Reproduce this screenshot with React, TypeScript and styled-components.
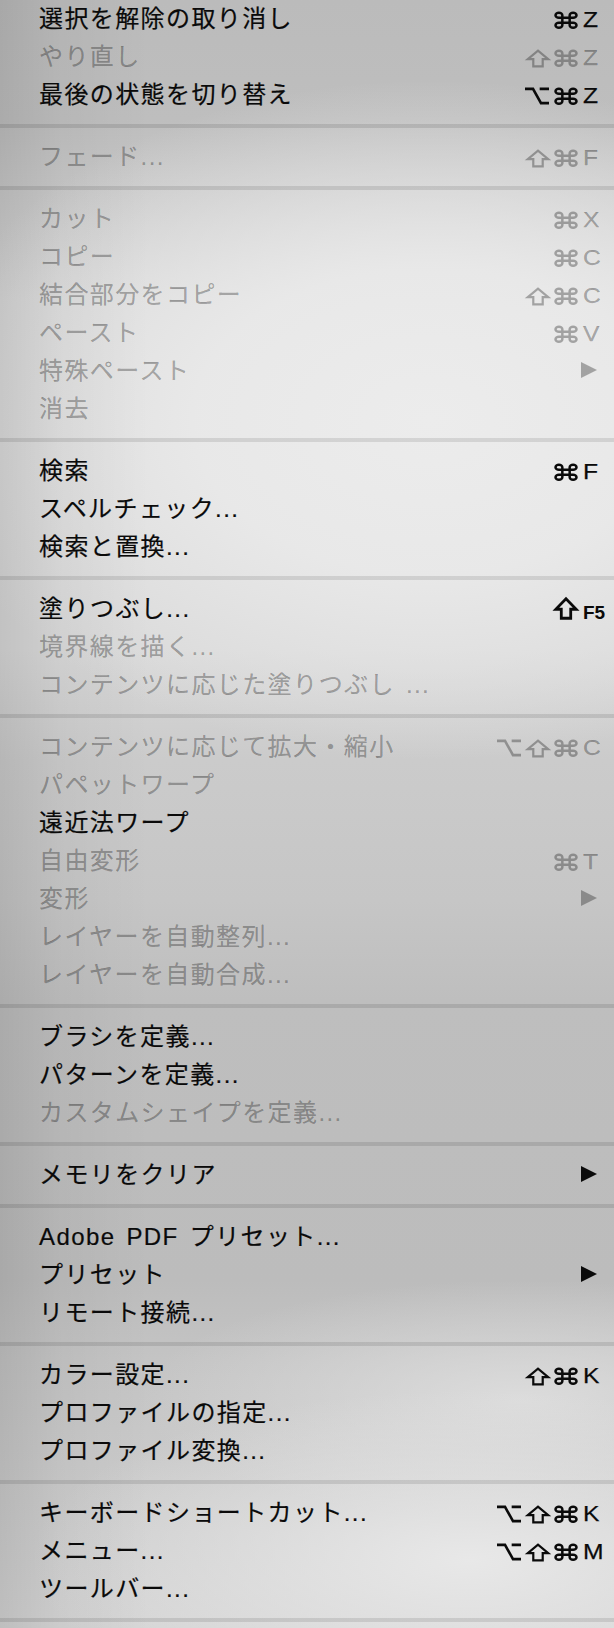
import React from 'react';
import styled, { createGlobalStyle } from 'styled-components';

type Mod = 'opt' | 'shift' | 'cmd';

interface Item {
  label: string;
  disabled?: boolean;
  mods?: Mod[];
  keyChar?: string;
  submenu?: boolean;
  fnKey?: boolean;
}

const groups: Item[][] = [
  [
    { label: '選択を解除の取り消し', mods: ['cmd'], keyChar: 'Z' },
    { label: 'やり直し', disabled: true, mods: ['shift', 'cmd'], keyChar: 'Z' },
    { label: '最後の状態を切り替え', mods: ['opt', 'cmd'], keyChar: 'Z' },
  ],
  [{ label: 'フェード...', disabled: true, mods: ['shift', 'cmd'], keyChar: 'F' }],
  [
    { label: 'カット', disabled: true, mods: ['cmd'], keyChar: 'X' },
    { label: 'コピー', disabled: true, mods: ['cmd'], keyChar: 'C' },
    { label: '結合部分をコピー', disabled: true, mods: ['shift', 'cmd'], keyChar: 'C' },
    { label: 'ペースト', disabled: true, mods: ['cmd'], keyChar: 'V' },
    { label: '特殊ペースト', disabled: true, submenu: true },
    { label: '消去', disabled: true },
  ],
  [
    { label: '検索', mods: ['cmd'], keyChar: 'F' },
    { label: 'スペルチェック...' },
    { label: '検索と置換...' },
  ],
  [
    { label: '塗りつぶし...', mods: ['shift'], keyChar: 'F5', fnKey: true },
    { label: '境界線を描く...', disabled: true },
    { label: 'コンテンツに応じた塗りつぶし ...', disabled: true },
  ],
  [
    { label: 'コンテンツに応じて拡大・縮小', disabled: true, mods: ['opt', 'shift', 'cmd'], keyChar: 'C' },
    { label: 'パペットワープ', disabled: true },
    { label: '遠近法ワープ' },
    { label: '自由変形', disabled: true, mods: ['cmd'], keyChar: 'T' },
    { label: '変形', disabled: true, submenu: true },
    { label: 'レイヤーを自動整列...', disabled: true },
    { label: 'レイヤーを自動合成...', disabled: true },
  ],
  [
    { label: 'ブラシを定義...' },
    { label: 'パターンを定義...' },
    { label: 'カスタムシェイプを定義...', disabled: true },
  ],
  [{ label: 'メモリをクリア', submenu: true }],
  [
    { label: 'Adobe PDF プリセット...' },
    { label: 'プリセット', submenu: true },
    { label: 'リモート接続...' },
  ],
  [
    { label: 'カラー設定...', mods: ['shift', 'cmd'], keyChar: 'K' },
    { label: 'プロファイルの指定...' },
    { label: 'プロファイル変換...' },
  ],
  [
    { label: 'キーボードショートカット...', mods: ['opt', 'shift', 'cmd'], keyChar: 'K' },
    { label: 'メニュー...', mods: ['opt', 'shift', 'cmd'], keyChar: 'M' },
    { label: 'ツールバー...' },
  ],
  [],
];

const GlobalStyle = createGlobalStyle`
  html, body {
    margin: 0;
    padding: 0;
  }
  body {
    background: #bdbdbd;
  }
`;

const Panel = styled.div`
  display: flow-root;
  width: 614px;
  height: 1628px;
  overflow: hidden;
  background:
    linear-gradient(90deg, rgba(0, 0, 0, 0.1) 0, rgba(0, 0, 0, 0.04) 60px, rgba(0, 0, 0, 0) 150px),
    radial-gradient(ellipse 520px 340px at 430px 420px, rgba(236, 236, 236, 1) 0, rgba(234, 234, 234, 0.9) 45%, rgba(230, 230, 230, 0) 100%),
    radial-gradient(ellipse 440px 170px at 470px 1560px, rgba(232, 232, 232, 1) 0, rgba(230, 230, 230, 0) 100%),
    radial-gradient(ellipse 380px 120px at 520px 1400px, rgba(222, 222, 222, 0.9) 0, rgba(222, 222, 222, 0) 100%),
    linear-gradient(180deg, #bbbbbb 0, #bebebe 120px, #cacaca 200px, #d8d8d8 300px, #d8d8d8 650px,
      #cbcbcb 760px, #c6c6c6 900px, #bebebe 1000px, #bcbcbc 1280px, #c4c4c4 1360px, #cccccc 1500px, #d4d4d4 1628px);
`;

const Menu = styled.ul`
  list-style: none;
  margin: -10px 0 0;
  padding: 0;
  font-family: 'Liberation Sans', 'Noto Sans CJK JP', sans-serif;
`;

const Group = styled.li`
  padding: 10px 0;
  border-bottom: 4px solid rgba(0, 0, 0, 0.1);
`;

const Row = styled.div<{ $disabled?: boolean }>`
  display: grid;
  grid-template-columns: 1fr auto 37px;
  align-items: center;
  height: 38px;
  padding-left: 39px;
  color: ${(p) => (p.$disabled ? 'rgba(0, 0, 0, 0.3)' : '#0a0a0a')};
`;

const Label = styled.span`
  font-size: 24px;
  letter-spacing: 1.4px;
  word-spacing: 3px;
  line-height: 38px;
  white-space: nowrap;
  -webkit-text-stroke: 0.2px currentColor;
`;

const Mods = styled.span`
  display: flex;
  justify-content: flex-end;
  align-items: center;
  gap: 6px;
  margin-top: 2px;
`;

const KeyCell = styled.span`
  display: flex;
  align-items: center;
  padding-left: 6px;
  margin-top: 2px;
`;

const KeyChar = styled.span<{ $fn?: boolean }>`
  display: inline-block;
  font-family: 'Liberation Sans', Arial, sans-serif;
  font-size: ${(p) => (p.$fn ? '19px' : '22px')};
  font-weight: ${(p) => (p.$fn ? 700 : 400)};
  line-height: 1;
  transform: ${(p) => (p.$fn ? 'translateY(2px)' : 'scaleX(1.12)')};
  transform-origin: left center;
  -webkit-text-stroke: ${(p) => (p.$fn ? '0' : '0.25px currentColor')};
`;

const Arrow = styled.svg`
  display: block;
  margin-left: -2px;
  margin-top: -4px;
`;

const ModIcon = styled.svg`
  display: block;
  overflow: visible;
`;

const ModGlyph = ({ mod, large }: { mod: Mod; large?: boolean }) => {
  if (mod === 'cmd') {
    return (
      <ModIcon width={22} height={16.5} viewBox="3 3 18 18" preserveAspectRatio="none">
        <path
          d="M15 6.5v11a2.8 2.8 0 1 0 2.8-2.8H6.2a2.8 2.8 0 1 0 2.8 2.8v-11a2.8 2.8 0 1 0-2.8 2.8h11.6a2.8 2.8 0 1 0-2.8-2.8"
          fill="none"
          stroke="currentColor"
          strokeWidth={2.5}
          vectorEffect="non-scaling-stroke"
        />
      </ModIcon>
    );
  }
  if (mod === 'shift') {
    return (
      <ModIcon
        width={22}
        height={large ? 21 : 17}
        viewBox="5 4.5 14 14"
        preserveAspectRatio="none"
        style={large ? { marginTop: -4 } : undefined}
      >
        <path
          d="M9 18v-6H5.5l6.5-7 6.5 7H15v6H9z"
          fill="none"
          stroke="currentColor"
          strokeWidth={large ? 2.8 : 2.2}
          strokeLinejoin="miter"
          vectorEffect="non-scaling-stroke"
        />
      </ModIcon>
    );
  }
  return (
    <ModIcon width={24} height={16} viewBox="3 3 18 18" preserveAspectRatio="none">
      <path
        d="M3 4h6l6 16h6M14 4h7"
        fill="none"
        stroke="currentColor"
        strokeWidth={2.6}
        vectorEffect="non-scaling-stroke"
      />
    </ModIcon>
  );
};

const MenuRow = ({ item }: { item: Item }) => (
  <Row $disabled={item.disabled}>
    <Label>{item.label}</Label>
    <Mods>
      {item.mods?.map((m) => (
        <ModGlyph key={m} mod={m} large={item.fnKey} />
      ))}
    </Mods>
    <KeyCell>
      {item.keyChar && <KeyChar $fn={item.fnKey}>{item.keyChar}</KeyChar>}
      {item.submenu && (
        <Arrow width={16} height={16} viewBox="0 0 16 16">
          <path d="M0 0L16 8L0 16Z" fill="currentColor" />
        </Arrow>
      )}
    </KeyCell>
  </Row>
);

export default function App() {
  return (
    <>
      <GlobalStyle />
      <Panel>
        <Menu>
          {groups.map((group, i) => (
            <Group key={i}>
              {group.map((item) => (
                <MenuRow key={item.label} item={item} />
              ))}
            </Group>
          ))}
        </Menu>
      </Panel>
    </>
  );
}
